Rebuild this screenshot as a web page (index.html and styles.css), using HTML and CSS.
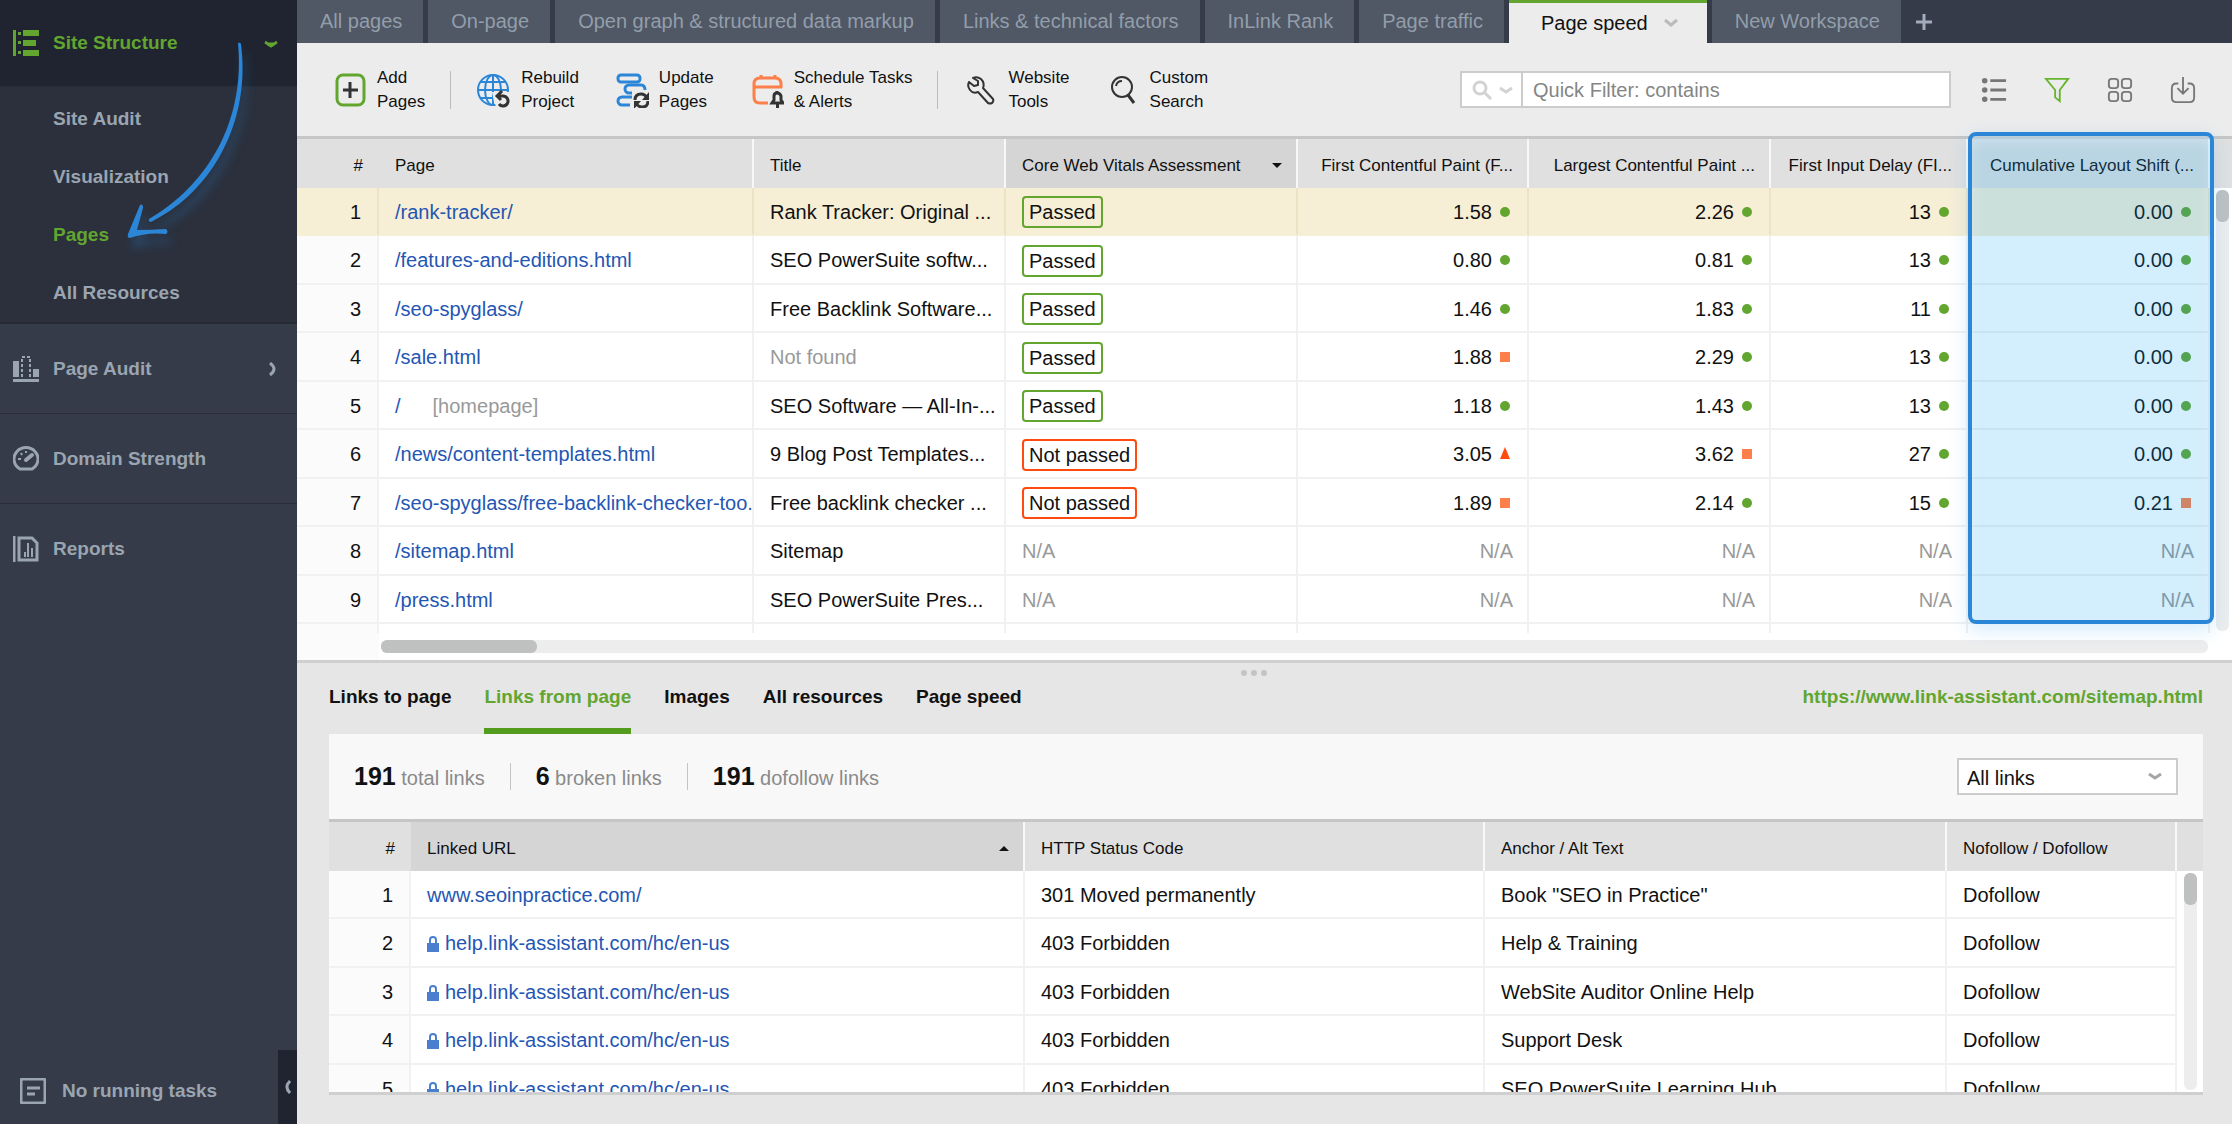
FILE: index.html
```
<!DOCTYPE html>
<html lang="en">
<head>
    <meta charset="UTF-8">
    <meta name="viewport" content="width=device-width, initial-scale=1.0">
    <title>Site Structure - Pages</title>
    <link rel="stylesheet" href="styles.css">
</head>
<body>
    <div class="app">
        <aside class="sidebar">
            <nav>
                <a href="#" class="nav-item nav-open">
                    <svg class="nav-icon" viewBox="0 0 26 26" fill="currentColor"><path d="M0 0h3v26H0zM5 2h3v3H5zM5 11h3v3H5zM5 21h3v3H5zM10 0h16v6H10zM10 10h13v6H10zM10 20h16v6H10z"/></svg>
                    Site Structure
                    <svg class="nav-arrow" viewBox="0 0 14 14" fill="none" stroke="currentColor" stroke-width="3"><path d="M1 6q2 1 3 2h6q1-1 3-2M4 8l3 2 3-2"/></svg>
                </a>
                <div class="subnav">
                    <a href="#">Site Audit</a>
                    <a href="#">Visualization</a>
                    <a href="#" class="active">Pages</a>
                    <a href="#">All Resources</a>
                </div>
                <a href="#" class="nav-item">
                    <svg class="nav-icon" viewBox="0 0 26 26" fill="currentColor"><path d="M0 5h6v16H0zM20 13h6v8h-6zM0 23h26v3H0z"/><path d="M9 21V1h8v20" fill="none" stroke="currentColor" stroke-width="2" stroke-dasharray="3 2"/></svg>
                    Page Audit
                    <svg class="nav-arrow" viewBox="0 0 14 14" fill="none" stroke="currentColor" stroke-width="3"><path d="M6 1q4 3 4 6t-4 6"/></svg>
                </a>
                <a href="#" class="nav-item">
                    <svg class="nav-icon" viewBox="0 0 26 26" fill="none" stroke="currentColor" stroke-width="3"><path d="M7 23a12 11.500 0 1 1 12 0z"/><path d="M13 14l6-5" stroke-width="4" stroke-linecap="round"/><path d="M5 13h3M8 7l1 2M13 5v2" stroke-width="2"/></svg>
                    Domain Strength
                </a>
                <a href="#" class="nav-item nav-last">
                    <svg class="nav-icon" viewBox="0 0 26 26" fill="none" stroke="currentColor" stroke-width="3"><path d="M1 0v26M6 2h13l5 5v17H6z"/><path d="M12 21v-5M15 21V7M19 21v-9" stroke-width="2"/></svg>
                    Reports
                </a>
            </nav>
            <div class="tasks">
                <svg class="nav-icon" viewBox="0 0 26 26" fill="none" stroke="currentColor" stroke-width="3"><rect x="1" y="1" width="24" height="24" rx="2"/><path d="M7 10h13M7 16h8"/></svg>
                No running tasks
                <button class="collapse" aria-label="Collapse sidebar">
                    <svg viewBox="0 0 8 14" fill="none" stroke="currentColor" stroke-width="3"><path d="M6 1Q0 7 6 13"/></svg>
                </button>
            </div>
            <svg class="pointer" viewBox="0 0 130 205" fill="#2b86d8">
                <path d="M116 1Q118 0 119 2C129 80 90 150 29 180Q26 180 27 177C80 147 124 85 116 1z"/>
                <path d="M18 163Q21 161 21 166L15 188Q28 188 44 187Q47 190 44 192Q25 190 8 196Q5 196 6 192z"/>
            </svg>
        </aside>

        <main>
            <div class="workspaces">
                <button class="ws">All pages</button>
                <button class="ws">On-page</button>
                <button class="ws">Open graph &amp; structured data markup</button>
                <button class="ws">Links &amp; technical factors</button>
                <button class="ws">InLink Rank</button>
                <button class="ws">Page traffic</button>
                <button class="ws ws-active">Page speed <svg viewBox="0 0 14 10" fill="none" stroke="#bbb" stroke-width="3"><path d="M1 2l6 5 6-5"/></svg></button>
                <button class="ws">New Workspace</button>
                <button class="ws-add" aria-label="Add workspace">
                    <svg viewBox="0 0 16 16" stroke="#a3acba" stroke-width="3"><path d="M8 0v16M0 8h16"/></svg>
                </button>
            </div>

            <div class="toolbar">
                <button class="tool">
                    <svg viewBox="0 0 36 36" fill="none"><rect x="6" y="3" width="27" height="30" rx="6" stroke="#62a52f" stroke-width="3"/><path d="M19 10v16M12 18h15" stroke="#333" stroke-width="3"/></svg>
                    <span>Add<br>Pages</span>
                </button>
                <span class="sep"></span>
                <button class="tool">
                    <svg viewBox="0 0 36 36" fill="none" stroke="#2b86d8" stroke-width="2"><circle cx="18" cy="18" r="15"/><ellipse cx="18" cy="18" rx="8" ry="15"/><path d="M18 3v30M3 18h30M6 10h24M6 26h24"/><path d="M17 20h20v16H22l-3-6z" fill="#ececec" stroke="none"/><path d="M22 24h6a5 5 0 1 1-4 8M27 19l-5 5 4 4" stroke="#333" stroke-width="3"/></svg>
                    <span>Rebuild<br>Project</span>
                </button>
                <button class="tool">
                    <svg viewBox="0 0 36 36" fill="none" stroke="#2b86d8" stroke-width="3"><rect x="5" y="3" width="22" height="7" rx="3"/><path d="M19 21h-3a4 4 0 0 1 0-8h12q4 0 4 5M19 25H9a4 4 0 0 0 0 8h8"/><path d="M22 28q0-6 6-6 4 0 6 4M35 29q0 6-6 6-4 0-6-4" stroke="#333"/><path d="M36 20v8h-7zM21 37v-8h7z" fill="#333" stroke="none"/></svg>
                    <span>Update<br>Pages</span>
                </button>
                <button class="tool">
                    <svg viewBox="0 0 36 36" fill="none" stroke="#fd7f4a" stroke-width="3"><path d="M20 31h-8q-6 0-6-6V12q0-6 6-6h15q6 0 6 6v4M6 15h28M13 3v4M27 3v4"/><path d="M24 31h11l-2-3v-4q-1-3-4-3t-3 3v4zM29 21v-2" stroke="#333"/><path d="M28 32h3v4h-3z" fill="#333" stroke="none"/></svg>
                    <span>Schedule Tasks<br>&amp; Alerts</span>
                </button>
                <span class="sep"></span>
                <button class="tool">
                    <svg viewBox="0 0 36 36" fill="none" stroke="#333" stroke-width="2" stroke-linejoin="round"><path d="M11 6q4-2 8 1 4 4 2 9l10 11q1 2-1 4-2 1-4 0L16 20q-5 2-8-2-3-4-1-8l5 4 4-1v-4z"/></svg>
                    <span>Website<br>Tools</span>
                </button>
                <button class="tool">
                    <svg viewBox="0 0 36 36" fill="none" stroke="#333" stroke-width="2"><ellipse cx="18" cy="15" rx="10" ry="10"/><path d="M12 14q1-5 6-5"/><path d="M24 23l6 8" stroke-width="3"/></svg>
                    <span>Custom<br>Search</span>
                </button>

                <div class="filter">
                    <button class="filter-mode" aria-label="Filter mode">
                        <svg viewBox="0 0 44 24" fill="none" stroke="#d2d2d2" stroke-width="3"><circle cx="8" cy="10" r="6"/><path d="M13 15l6 6M28 10l6 4 6-4"/></svg>
                    </button>
                    <input type="text" placeholder="Quick Filter: contains" aria-label="Quick Filter">
                </div>
                <div class="view-buttons">
                    <button aria-label="List"><svg viewBox="0 0 28 28" stroke="#777" fill="#777" stroke-width="2"><circle cx="4" cy="4" r="2"/><circle cx="4" cy="14" r="2"/><circle cx="4" cy="24" r="2"/><path d="M10 4h17M10 14h17M10 24h17" stroke-width="3"/></svg></button>
                    <button aria-label="Filter"><svg viewBox="0 0 28 28" fill="none" stroke="#67b52f" stroke-width="2"><path d="M2 2h24l-9 12v12l-5-4v-8z"/></svg></button>
                    <button aria-label="Columns"><svg viewBox="0 0 28 28" fill="none" stroke="#777" stroke-width="2"><rect x="2" y="2" width="10" height="10" rx="3"/><rect x="16" y="2" width="10" height="10" rx="3"/><rect x="2" y="16" width="10" height="10" rx="3"/><rect x="16" y="16" width="10" height="10" rx="3"/></svg></button>
                    <button aria-label="Export"><svg viewBox="0 0 28 28" fill="none" stroke="#777" stroke-width="2"><path d="M9 7H7q-5 0-5 5v10q0 5 5 5h14q5 0 5-5V12q0-5-5-5h-2M14 0v17M8 12l6 6 6-6"/></svg></button>
                </div>
            </div>

            <section class="pages">
                <div class="pages-scroll">
                    <table class="grid">
                        <colgroup><col class="w-num"><col><col class="w-title"><col class="w-cwv"><col class="w-fcp"><col class="w-lcp"><col class="w-fid"><col class="w-cls"><col class="w-bar"></colgroup>
                        <thead>
                            <tr><th class="num">#</th><th>Page</th><th>Title</th><th class="sorted">Core Web Vitals Assessment<i class="sort-down"></i></th><th class="val">First Contentful Paint (F...</th><th class="val">Largest Contentful Paint ...</th><th class="val">First Input Delay (FI...</th><th class="val">Cumulative Layout Shift (...</th><th></th></tr>
                        </thead>
                        <tbody>
                            <tr class="selected"><td class="num">1</td><td><a href="#">/rank-tracker/</a></td><td>Rank Tracker: Original ...</td><td><span class="badge">Passed</span></td><td class="val">1.58<i class="ok"></i></td><td class="val">2.26<i class="ok"></i></td><td class="val">13<i class="ok"></i></td><td class="val">0.00<i class="ok"></i></td><td class="bar"></td></tr>
                            <tr><td class="num">2</td><td><a href="#">/features-and-editions.html</a></td><td>SEO PowerSuite softw...</td><td><span class="badge">Passed</span></td><td class="val">0.80<i class="ok"></i></td><td class="val">0.81<i class="ok"></i></td><td class="val">13<i class="ok"></i></td><td class="val">0.00<i class="ok"></i></td><td class="bar"></td></tr>
                            <tr><td class="num">3</td><td><a href="#">/seo-spyglass/</a></td><td>Free Backlink Software...</td><td><span class="badge">Passed</span></td><td class="val">1.46<i class="ok"></i></td><td class="val">1.83<i class="ok"></i></td><td class="val">11<i class="ok"></i></td><td class="val">0.00<i class="ok"></i></td><td class="bar"></td></tr>
                            <tr><td class="num">4</td><td><a href="#">/sale.html</a></td><td class="muted">Not found</td><td><span class="badge">Passed</span></td><td class="val">1.88<i class="warn"></i></td><td class="val">2.29<i class="ok"></i></td><td class="val">13<i class="ok"></i></td><td class="val">0.00<i class="ok"></i></td><td class="bar"></td></tr>
                            <tr><td class="num">5</td><td><a href="#">/</a><span class="home">[homepage]</span></td><td>SEO Software — All-In-...</td><td><span class="badge">Passed</span></td><td class="val">1.18<i class="ok"></i></td><td class="val">1.43<i class="ok"></i></td><td class="val">13<i class="ok"></i></td><td class="val">0.00<i class="ok"></i></td><td class="bar"></td></tr>
                            <tr><td class="num">6</td><td><a href="#">/news/content-templates.html</a></td><td>9 Blog Post Templates...</td><td><span class="badge badge-fail">Not passed</span></td><td class="val">3.05<i class="bad"></i></td><td class="val">3.62<i class="warn"></i></td><td class="val">27<i class="ok"></i></td><td class="val">0.00<i class="ok"></i></td><td class="bar"></td></tr>
                            <tr><td class="num">7</td><td><a href="#">/seo-spyglass/free-backlink-checker-too.</a></td><td>Free backlink checker ...</td><td><span class="badge badge-fail">Not passed</span></td><td class="val">1.89<i class="warn"></i></td><td class="val">2.14<i class="ok"></i></td><td class="val">15<i class="ok"></i></td><td class="val">0.21<i class="warn"></i></td><td class="bar"></td></tr>
                            <tr><td class="num">8</td><td><a href="#">/sitemap.html</a></td><td>Sitemap</td><td class="muted">N/A</td><td class="val muted">N/A</td><td class="val muted">N/A</td><td class="val muted">N/A</td><td class="val muted">N/A</td><td class="bar"></td></tr>
                            <tr><td class="num">9</td><td><a href="#">/press.html</a></td><td>SEO PowerSuite Pres...</td><td class="muted">N/A</td><td class="val muted">N/A</td><td class="val muted">N/A</td><td class="val muted">N/A</td><td class="val muted">N/A</td><td class="bar"></td></tr>
                            <tr><td class="num"></td><td></td><td></td><td></td><td></td><td></td><td></td><td></td><td class="bar"></td></tr>
                        </tbody>
                    </table>
                    <div class="vbar"><span></span></div>
                </div>
                <div class="pages-foot"><div class="hbar"><span></span></div></div>
                <div class="highlight"></div>
            </section>

            <section class="details">
                <div class="handle"><i></i><i></i><i></i></div>
                <div class="detail-tabs">
                    <button>Links to page</button>
                    <button class="active">Links from page</button>
                    <button>Images</button>
                    <button>All resources</button>
                    <button>Page speed</button>
                    <a href="#" class="page-url">https://www.link-assistant.com/sitemap.html</a>
                </div>
                <div class="panel">
                    <div class="stats">
                        <p><b>191</b> total links</p>
                        <p><b>6</b> broken links</p>
                        <p><b>191</b> dofollow links</p>
                        <select aria-label="Links shown"><option>All links</option></select>
                    </div>
                    <div class="links-scroll">
                        <table class="grid links">
                            <colgroup><col class="w-num"><col><col class="w-status"><col class="w-anchor"><col class="w-follow"><col class="w-end"></colgroup>
                            <thead>
                                <tr><th class="num">#</th><th class="sorted">Linked URL<i class="sort-up"></i></th><th>HTTP Status Code</th><th>Anchor / Alt Text</th><th>Nofollow / Dofollow</th><th></th></tr>
                            </thead>
                            <tbody>
                                <tr><td class="num">1</td><td><a href="#">www.seoinpractice.com/</a></td><td>301 Moved permanently</td><td>Book "SEO in Practice"</td><td>Dofollow</td><td class="bar"></td></tr>
                                <tr><td class="num">2</td><td><a href="#"><svg class="lock" viewBox="0 0 12 16"><path d="M0 7h12v9H0z" fill="#4a7fd0"/><path d="M3 8V4q0-3 3-3t3 3v4" fill="none" stroke="#4a7fd0" stroke-width="2"/></svg>help.link-assistant.com/hc/en-us</a></td><td>403 Forbidden</td><td>Help &amp; Training</td><td>Dofollow</td><td class="bar"></td></tr>
                                <tr><td class="num">3</td><td><a href="#"><svg class="lock" viewBox="0 0 12 16"><path d="M0 7h12v9H0z" fill="#4a7fd0"/><path d="M3 8V4q0-3 3-3t3 3v4" fill="none" stroke="#4a7fd0" stroke-width="2"/></svg>help.link-assistant.com/hc/en-us</a></td><td>403 Forbidden</td><td>WebSite Auditor Online Help</td><td>Dofollow</td><td class="bar"></td></tr>
                                <tr><td class="num">4</td><td><a href="#"><svg class="lock" viewBox="0 0 12 16"><path d="M0 7h12v9H0z" fill="#4a7fd0"/><path d="M3 8V4q0-3 3-3t3 3v4" fill="none" stroke="#4a7fd0" stroke-width="2"/></svg>help.link-assistant.com/hc/en-us</a></td><td>403 Forbidden</td><td>Support Desk</td><td>Dofollow</td><td class="bar"></td></tr>
                                <tr><td class="num">5</td><td><a href="#"><svg class="lock" viewBox="0 0 12 16"><path d="M0 7h12v9H0z" fill="#4a7fd0"/><path d="M3 8V4q0-3 3-3t3 3v4" fill="none" stroke="#4a7fd0" stroke-width="2"/></svg>help.link-assistant.com/hc/en-us</a></td><td>403 Forbidden</td><td>SEO PowerSuite Learning Hub</td><td>Dofollow</td><td class="bar"></td></tr>
                            </tbody>
                        </table>
                        <div class="vbar"><span></span></div>
                    </div>
                </div>
            </section>
        </main>
    </div>
</body>
</html>
```
FILE: styles.css
```
* {
    margin: 0;
    padding: 0;
    box-sizing: border-box;
}

body {
    font-family: 'Liberation Sans', Arial, sans-serif;
    font-size: 20px;
    color: #111;
    background: #e6e6e6;
}

button,
input,
select {
    font: inherit;
    color: inherit;
    background: none;
    border: none;
    border-radius: 0;
}

button {
    cursor: pointer;
}

a {
    color: #2456b3;
    text-decoration: none;
}

svg {
    display: block;
    flex: none;
}

.app {
    display: flex;
    height: 100vh;
    overflow: hidden;
}

/* Sidebar */
.sidebar {
    position: relative;
    flex: none;
    display: flex;
    flex-direction: column;
    justify-content: space-between;
    width: 297px;
    background: #353b48;
    color: #9aa5b1;
    font-size: 19px;
    font-weight: bold;
}

.sidebar a {
    color: inherit;
}

.nav-item {
    display: flex;
    align-items: center;
    gap: 14px;
    height: 90px;
    padding: 0 19px 0 13px;
    border-bottom: 1px solid #282d38;
}

.nav-last {
    border-bottom: none;
}

.sidebar .nav-open {
    height: 87px;
    background: #1f2430;
    color: #62a52f;
}

.nav-icon {
    width: 26px;
    height: 26px;
}

.nav-arrow {
    width: 14px;
    height: 14px;
    margin-left: auto;
}

.subnav {
    display: flex;
    flex-direction: column;
    height: 237px;
    padding: 3px 0 0 53px;
    background: #2b303c;
    border-bottom: 2px solid #252a35;
}

.subnav a {
    line-height: 58px;
}

.sidebar .subnav .active {
    color: #62a52f;
}

.tasks {
    display: flex;
    align-items: center;
    gap: 16px;
    height: 74px;
    padding: 8px 0 0 20px;
}

.tasks .collapse {
    display: flex;
    align-items: center;
    justify-content: center;
    width: 19px;
    height: 74px;
    margin: -8px 0 0 auto;
    background: #1f2430;
}

.collapse svg {
    width: 8px;
    height: 14px;
}

.pointer {
    position: absolute;
    left: 122px;
    top: 42px;
    width: 130px;
    height: 205px;
    filter: drop-shadow(4px 10px 5px rgba(43, 134, 216, 0.3));
}

/* Workspace tabs */
main {
    flex: 1;
    min-width: 0;
    display: flex;
    flex-direction: column;
}

.workspaces {
    display: flex;
    flex: none;
    gap: 5px;
    height: 43px;
    background: #353b48;
}

.ws {
    padding: 0 21px 0 23px;
    background: #505765;
    color: #929eaa;
}

.ws-active {
    display: flex;
    align-items: center;
    gap: 16px;
    padding: 0 29px 0 32px;
    background: #ececec;
    border-top: 3px solid #62a52f;
    color: #111;
}

.ws-active svg {
    width: 14px;
    height: 10px;
}

.ws-add {
    padding: 0 10px;
}

.ws-add svg {
    width: 16px;
    height: 16px;
}

/* Toolbar */
.toolbar {
    display: flex;
    flex: none;
    align-items: center;
    height: 96px;
    padding: 0 36px 0 34px;
    background: #ececec;
    border-bottom: 3px solid #c6c6c6;
    font-size: 17px;
}

.tool {
    display: flex;
    align-items: center;
    gap: 10px;
    margin-right: 34px;
    line-height: 24px;
    text-align: left;
}

.tool svg {
    width: 36px;
    height: 36px;
}

.sep {
    width: 1px;
    height: 38px;
    margin: 0 24px 0 -9px;
    background: #bbb;
}

.filter {
    display: flex;
    width: 491px;
    height: 37px;
    margin-left: auto;
    background: #fff;
    border: 2px solid #ccc;
    font-size: 20px;
}

.filter-mode {
    width: 61px;
    padding-left: 10px;
    border-right: 2px solid #ccc;
}

.filter-mode svg {
    width: 44px;
    height: 24px;
}

.filter input {
    flex: 1;
    min-width: 0;
    padding: 2px 10px 0;
}

.filter input::placeholder {
    color: #858585;
}

.view-buttons {
    display: flex;
    gap: 37px;
    margin-left: 30px;
}

.view-buttons svg {
    width: 26px;
    height: 26px;
}

/* Data grids */
.grid {
    width: 100%;
    table-layout: fixed;
    border-collapse: separate;
    border-spacing: 0;
}

.grid th {
    height: 49px;
    padding: 4px 16px 0;
    background: #e0e0e0;
    border-right: 2px solid #f8f8f8;
    font-size: 17px;
    font-weight: normal;
    text-align: left;
    white-space: nowrap;
}

.grid th.num,
.grid th:last-child {
    border-right: none;
}

.grid th.sorted {
    background: #d5d5d5;
}

.grid td {
    height: 48px;
    padding: 2px 0 0 16px;
    background: #fff;
    border-right: 2px solid #f1f1f1;
    border-bottom: 2px solid #f1f1f1;
    white-space: nowrap;
    overflow: hidden;
}

.grid tr:nth-child(even) td {
    height: 49px;
}

.grid td.num {
    padding: 2px 16px 0 0;
    background: #fbfbfb;
    text-align: right;
}

.grid th.num {
    padding: 4px 16px 0 0;
    text-align: right;
}

.grid td.val {
    padding: 2px 17px 0 0;
    text-align: right;
}

.grid td.val.muted {
    padding-right: 14px;
}

.grid th.val {
    padding: 4px 14px 0 0;
    text-align: right;
}

.grid .selected td {
    background: #f7eed6;
    border-color: #ece3c4;
    border-bottom-color: #f7eed6;
}

.grid td.bar,
.grid .selected td.bar {
    background: #fff;
    border: none;
}

.grid .muted,
.home {
    color: #999;
}

.home {
    margin-left: 32px;
}

.w-num { width: 82px; }
.w-title { width: 252px; }
.w-cwv { width: 292px; }
.w-fcp { width: 231px; }
.w-lcp { width: 242px; }
.w-fid { width: 197px; }
.w-cls { width: 242px; }
.w-bar { width: 22px; }
.w-status { width: 460px; }
.w-anchor { width: 462px; }
.w-follow { width: 230px; }
.w-end { width: 26px; }

.sort-down,
.sort-up {
    float: right;
    margin: 7px -2px 0 0;
    border: 5px solid transparent;
    border-top-color: #111;
    border-bottom: none;
}

.sort-up {
    border-top: none;
    border-bottom: 5px solid #111;
}

.badge {
    display: inline-block;
    padding: 0 5px;
    border: 2px solid #62a52f;
    border-radius: 4px;
    background: #fff;
    line-height: 28px;
}

.selected .badge {
    background: none;
}

.badge-fail {
    border-color: #ff4b10;
}

.val i {
    display: inline-block;
    width: 10px;
    height: 10px;
    margin-left: 8px;
    vertical-align: 2px;
}

.ok {
    background: #62a52f;
    border-radius: 50%;
}

.warn {
    background: #fd7f4a;
}

.val .bad {
    height: 12px;
    background: #ff4b10;
    clip-path: polygon(50% 0, 100% 100%, 0 100%);
}

/* Pages table */
.pages {
    position: relative;
    flex: none;
}

.pages-scroll {
    position: relative;
    height: 494px;
    overflow: hidden;
}

.vbar {
    position: absolute;
    top: 51px;
    right: 3px;
    bottom: 2px;
    width: 13px;
    border-radius: 6px;
    background: #ededed;
}

.vbar span {
    display: block;
    height: 32px;
    border-radius: 6px;
    background: #bfc1c1;
}

.pages-foot {
    height: 27px;
    padding: 7px 24px 0 84px;
    background: linear-gradient(to right, #fbfbfb 82px, #fff 82px);
}

.hbar {
    height: 13px;
    border-radius: 6px;
    background: #ededed;
}

.hbar span {
    display: block;
    width: 156px;
    height: 13px;
    border-radius: 6px;
    background: #bfc1c1;
}

.highlight {
    position: absolute;
    top: -7px;
    right: 18px;
    width: 246px;
    height: 492px;
    border: 4px solid #2b86d8;
    border-radius: 8px;
    background: rgba(11, 160, 244, 0.18);
    box-shadow: 0 6px 20px rgba(43, 160, 240, 0.2), inset 0 6px 14px rgba(255, 255, 255, 0.3);
}

/* Details */
.details {
    flex: 1;
    min-height: 0;
    display: flex;
    flex-direction: column;
    padding: 0 29px 29px 32px;
    border-top: 3px solid #cfcfcf;
}

.handle {
    display: flex;
    flex: none;
    justify-content: center;
    gap: 4px;
    height: 19px;
    padding: 7px 24px 0 0;
}

.handle i {
    width: 6px;
    height: 6px;
    border-radius: 50%;
    background: #c4c4c4;
}

.detail-tabs {
    display: flex;
    flex: none;
    align-items: flex-start;
    gap: 33px;
    height: 52px;
    font-size: 19px;
    font-weight: bold;
}

.detail-tabs button {
    height: 52px;
    padding-bottom: 22px;
    font-weight: bold;
}

.detail-tabs .active {
    padding-bottom: 16px;
    border-bottom: 6px solid #539c1e;
    color: #62a52f;
}

.page-url {
    margin-left: auto;
    line-height: 30px;
    color: #62a52f;
}

.panel {
    flex: 1;
    min-height: 0;
    display: flex;
    flex-direction: column;
    background: #fff;
    border-bottom: 3px solid #cfcfcf;
}

.stats {
    display: flex;
    flex: none;
    align-items: center;
    height: 88px;
    padding: 0 25px;
    background: #f8f8f8;
    border-bottom: 3px solid #c6c6c6;
    color: #8a8a8a;
}

.stats p + p {
    margin-left: 25px;
    padding-left: 25px;
    border-left: 1px solid #c4c4c4;
}

.stats b {
    color: #111;
    font-size: 25px;
    line-height: 26px;
}

.stats select {
    appearance: none;
    width: 221px;
    height: 37px;
    margin-left: auto;
    padding: 2px 8px 0;
    border: 2px solid #ccc;
    color: #111;
    background: #fff url("data:image/svg+xml,%3Csvg xmlns='http://www.w3.org/2000/svg' width='14' height='10' fill='none' stroke='%23a5a5a5' stroke-width='3'%3E%3Cpath d='M1 2l6 4 6-4'/%3E%3C/svg%3E") no-repeat right 14px center;
}

.links-scroll {
    position: relative;
    flex: 1;
    min-height: 0;
    overflow: hidden;
}

.lock {
    display: inline-block;
    width: 12px;
    height: 16px;
    margin-right: 6px;
    vertical-align: -2px;
}

.links-scroll .vbar {
    right: 6px;
}
```
